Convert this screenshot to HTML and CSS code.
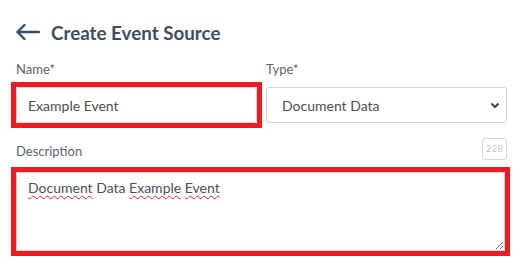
FILE: index.html
```html
<!DOCTYPE html>
<html lang="en">
<head>
  <meta charset="UTF-8">
  <title>Create Event Source</title>
  <link rel="stylesheet" href="styles.css">
</head>
<body>
  <div class="page">
    <div class="header">
      <svg class="back" width="24" height="16" viewBox="0 0 24 16">
        <path d="M23 8H1.5M8.5 1L1.5 8l7 7" fill="none" stroke="#3d4f5f" stroke-width="2.4" stroke-linecap="round" stroke-linejoin="round"/>
      </svg>
      <h1>Create Event Source</h1>
    </div>

    <div class="row">
      <div class="field">
        <label>Name*</label>
        <div class="flag">
          <input class="input" type="text" value="Example Event">
        </div>
      </div>
      <div class="field">
        <label>Type*</label>
        <div class="select">
          <span>Document Data</span>
          <svg width="10" height="7" viewBox="0 0 10 7">
            <path d="M1.5 1.5L5 5l3.5-3.5" fill="none" stroke="#3d4650" stroke-width="2"/>
          </svg>
        </div>
      </div>
    </div>

    <div class="desc-head">
      <label>Description</label>
      <span class="counter">228</span>
    </div>
    <div class="flag wide">
      <div class="textarea">
        <span class="typo">Document</span> Data <span class="typo">Example</span> <span class="typo">Event</span>
      </div>
    </div>
  </div>
</body>
</html>
```

FILE: styles.css
```css
body {
  margin: 0;
  font-family: Lato, "Noto Sans", sans-serif;
  background: #fff;
  color: #495057;
}
.page {
  box-sizing: border-box;
  min-height: 274px;
  padding: 20px 21px 18px 16px;
}
.header {
  display: flex;
  align-items: center;
  gap: 11px;
  height: 24px;
}
.header h1 {
  margin: 0;
  font-size: 18.8px;
  font-weight: 700;
  color: #3d4f5f;
}
.row {
  display: grid;
  grid-template-columns: 241px 241px;
  gap: 9px;
  margin-top: 17px;
}
.field label,
.desc-head label {
  display: block;
  font-size: 13px;
  line-height: 16px;
  color: #5c6570;
}
.field label {
  margin-bottom: 10px;
}
.input,
.select {
  display: block;
  box-sizing: border-box;
  height: 36px;
  width: 100%;
  border: 1px solid #ced4da;
  border-radius: 3px;
  padding: 0 11px;
  font-family: inherit;
  font-size: 14px;
  color: #495057;
  background: #fff;
  outline: none;
}
.select {
  display: flex;
  align-items: center;
  justify-content: space-between;
  padding: 0 6px 0 15px;
}
.flag {
  margin: -5px;
  border: 5px solid #ed1c24;
}
.flag.wide {
  width: 489px;
  margin-bottom: 0;
}
.desc-head {
  display: flex;
  justify-content: space-between;
  align-items: flex-start;
  margin-top: 15px;
  margin-bottom: 12px;
  width: 491px;
  height: 22px;
}
.desc-head label {
  margin-top: 5px;
}
.counter {
  box-sizing: border-box;
  width: 25px;
  height: 22px;
  border: 1px solid #d5dae0;
  border-radius: 3px;
  font-family: "DejaVu Sans", sans-serif;
  font-size: 9px;
  color: #c3cad3;
  display: flex;
  align-items: center;
  justify-content: center;
}
.textarea {
  box-sizing: border-box;
  width: 489px;
  height: 79px;
  border: 1px solid #ced4da;
  padding: 6px 11px;
  font-size: 14px;
  line-height: 17px;
  color: #495057;
  resize: both;
  overflow: auto;
}
.typo {
  text-decoration: underline wavy #e02020;
  text-decoration-thickness: 1px;
  text-underline-offset: 2px;
}
```
